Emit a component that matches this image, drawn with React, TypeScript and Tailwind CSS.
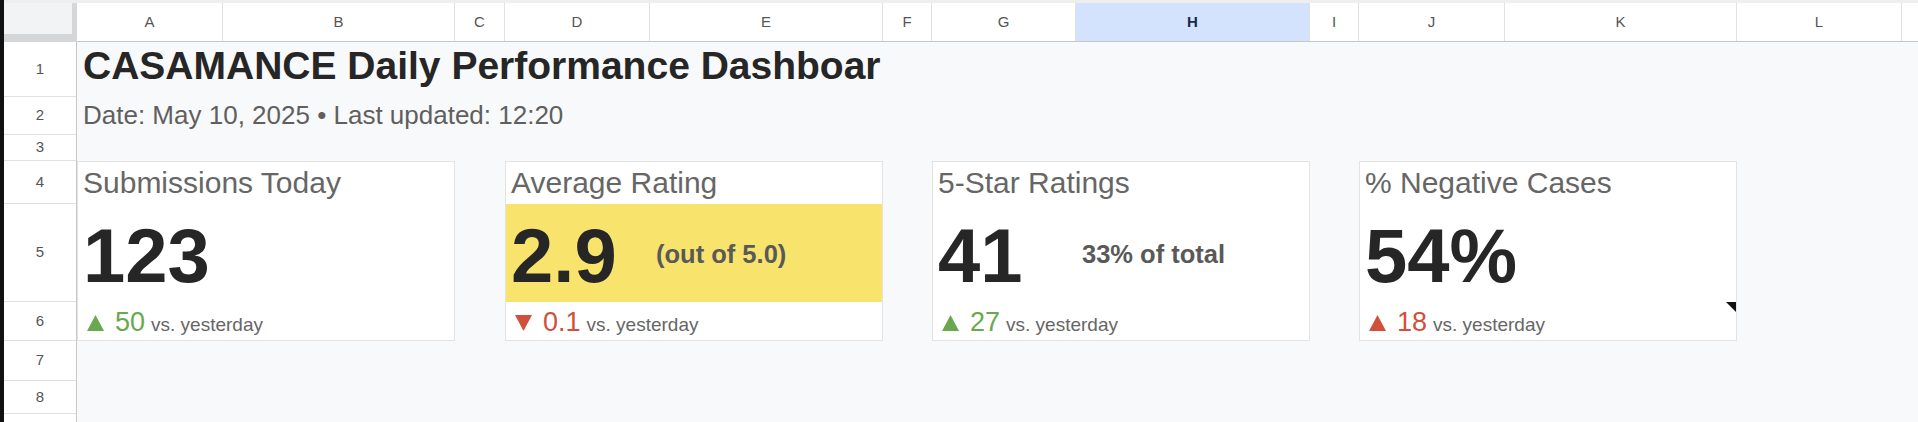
const columns = [
  { label: "A", width: "w-[146px]" },
  { label: "B", width: "w-[232px]" },
  { label: "C", width: "w-[50px]" },
  { label: "D", width: "w-[145px]" },
  { label: "E", width: "w-[233px]" },
  { label: "F", width: "w-[49px]" },
  { label: "G", width: "w-[144px]" },
  { label: "H", width: "w-[234px]", selected: true },
  { label: "I", width: "w-[49px]" },
  { label: "J", width: "w-[146px]" },
  { label: "K", width: "w-[232px]" },
  { label: "L", width: "w-[165px]" },
  { label: "", width: "w-[146px]" },
];

const rows = [
  { n: "1", h: "h-[55px]" },
  { n: "2", h: "h-[38px]" },
  { n: "3", h: "h-[26px]" },
  { n: "4", h: "h-[43px]" },
  { n: "5", h: "h-[98px]" },
  { n: "6", h: "h-[39px]" },
  { n: "7", h: "h-[40px]" },
  { n: "8", h: "h-[33px]" },
  { n: "", h: "h-[33px]" },
];

type Card = {
  label: string;
  value: string;
  extra?: string;
  delta: string;
  up: boolean;
  good: boolean;
  place: string;
  first: string;
  highlight?: boolean;
  note?: boolean;
};

const cards: Card[] = [
  { label: "Submissions Today", value: "123", delta: "50", up: true, good: true, place: "col-start-1", first: "w-[145px]" },
  { label: "Average Rating", value: "2.9", extra: "(out of 5.0)", delta: "0.1", up: false, good: false, place: "col-start-4", first: "w-[144px]", highlight: true },
  { label: "5-Star Ratings", value: "41", extra: "33% of total", delta: "27", up: true, good: true, place: "col-start-7", first: "w-[143px]" },
  { label: "% Negative Cases", value: "54%", delta: "18", up: true, good: false, place: "col-start-10", first: "w-[145px]", note: true },
];

function Triangle({ up, color }: { up: boolean; color: string }) {
  return (
    <svg width="17" height="16" viewBox="0 0 17 16" className="mr-[11px] shrink-0">
      {up ? <polygon points="8.5,0 17,16 0,16" fill={color} /> : <polygon points="0,0 17,0 8.5,16" fill={color} />}
    </svg>
  );
}

function KpiCard({ card }: { card: Card }) {
  const color = card.good ? "#6aa84f" : "#d0503c";
  return (
    <div className={`${card.place} col-span-2 row-start-4 row-span-3 grid grid-rows-[42px_98px_1fr] border border-[#e3e3e3] bg-white`}>
      {/* label */}
      <div className="flex items-end pb-[6px] pl-[5px] text-[30px] leading-none text-[#666666] whitespace-nowrap">
        {card.label}
      </div>

      {/* value */}
      <div className={`flex ${card.highlight ? "bg-[#f8e46c]" : ""}`}>
        <div className={`${card.first} shrink-0 flex items-end pb-[8px] pl-[5px] text-[76px] font-bold leading-none text-[#262626] whitespace-nowrap`}>
          {card.value}
        </div>
        {card.extra && (
          <div className="flex items-end pb-[35px] pl-[6px] text-[25.5px] font-bold leading-none text-[#595959] whitespace-nowrap">
            {card.extra}
          </div>
        )}
      </div>

      {/* delta */}
      <div className="relative flex items-end pb-[4px] pl-[9px]">
        <div className="flex items-baseline whitespace-nowrap">
          <Triangle up={card.up} color={color} />
          <span className="text-[27px] leading-none" style={{ color }}>
            {card.delta}
          </span>
          <span className="ml-[6px] text-[19px] leading-none text-[#666666]">vs. yesterday</span>
        </div>
        {card.note && (
          <svg width="10" height="10" viewBox="0 0 10 10" className="absolute right-0 top-0">
            <polygon points="0,0 10,0 10,10" fill="#111111" />
          </svg>
        )}
      </div>
    </div>
  );
}

export default function App() {
  return (
    <div className="flex h-[422px] w-[1918px] overflow-hidden bg-[#f8f9fa] font-['Liberation_Sans',Arial,sans-serif]">
      {/* window edge */}
      <div className="w-[4px] shrink-0 bg-[#111111]" />

      <div className="flex min-w-0 flex-1 flex-col">
        {/* column headers */}
        <div className="flex h-[42px] shrink-0 border-t-[3px] border-[#eeeeee]">
          <div className="w-[73px] shrink-0 border-r-[5px] border-b-[8px] border-[#d4d6d8] bg-[#f1f3f4]" />
          <div className="flex min-w-0 flex-1 overflow-hidden border-b border-[#c7c7c7] bg-white">
            {columns.map((c, i) => (
              <div
                key={i}
                className={`${c.width} shrink-0 flex items-center justify-center border-r border-[#e1e1e1] text-[15px] ${
                  c.selected ? "bg-[#d3e3fd] font-bold text-[#1b2a48]" : "text-[#555555]"
                }`}
              >
                {c.label}
              </div>
            ))}
          </div>
        </div>

        <div className="flex min-h-0 flex-1">
          {/* row headers */}
          <div className="w-[73px] shrink-0 border-r border-[#c7c7c7] bg-white">
            {rows.map((r, i) => (
              <div
                key={i}
                className={`${r.h} flex items-center justify-center border-b border-[#e1e1e1] text-[15px] text-[#555555]`}
              >
                {r.n}
              </div>
            ))}
          </div>

          {/* sheet body */}
          <div className="grid flex-1 grid-cols-[146px_232px_50px_145px_233px_49px_144px_234px_49px_146px_232px_165px_1fr] grid-rows-[55px_38px_26px_43px_98px_39px_40px_33px_1fr]">
            <div className="col-start-1 col-span-5 row-start-1 flex items-end pb-[12px] pl-[6px] text-[39px] font-bold leading-none text-[#262626] whitespace-nowrap">
              CASAMANCE Daily Performance Dashboar
            </div>
            <div className="col-start-1 col-span-12 row-start-2 flex items-end pb-[7px] pl-[6px] text-[26px] leading-none text-[#5f5f5f] whitespace-nowrap">
              Date: May 10, 2025 • Last updated: 12:20
            </div>

            {cards.map((card) => (
              <KpiCard key={card.label} card={card} />
            ))}
          </div>
        </div>
      </div>
    </div>
  );
}
